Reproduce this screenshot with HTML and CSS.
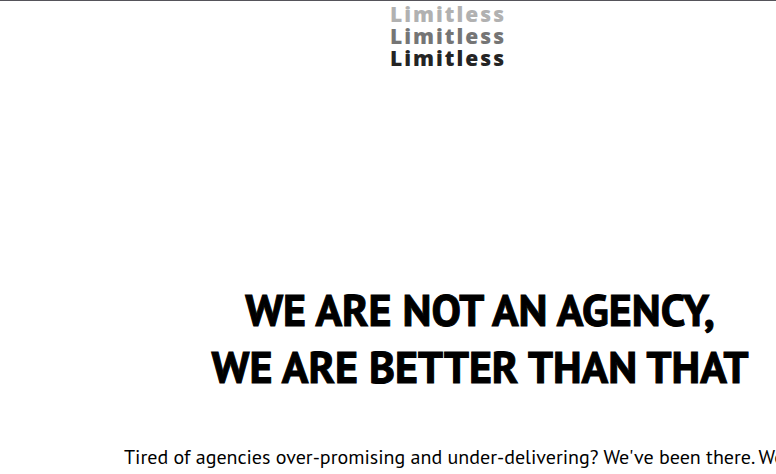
FILE: index.html
```
<!DOCTYPE html>
<html lang="en">
<head>
<meta charset="utf-8">
<meta name="viewport" content="width=device-width, initial-scale=1">
<title>Limitless</title>
<link rel="stylesheet" href="styles.css">
</head>
<body>
<header class="site-header">
<div class="logo">
<span class="logo-line logo-light">Limitless</span>
<span class="logo-line logo-mid">Limitless</span>
<span class="logo-line logo-dark">Limitless</span>
</div>
</header>
<main class="hero">
<h1 class="hero-title">WE ARE NOT AN AGENCY,<br>WE ARE BETTER THAN THAT</h1>
<p class="hero-text">Tired of agencies over-promising and under-delivering? We've been there. We</p>
</main>
</body>
</html>
```
FILE: styles.css
```
* {
  box-sizing: border-box;
}

body {
  margin: 0;
  overflow: hidden;
  background: #fff;
  color: #000;
  font-family: "PT Sans", Lato, "Noto Sans", sans-serif;
}

.site-header {
  display: flex;
  justify-content: center;
  padding: 2px 0 0 120px;
  border-top: 1px solid #55535a;
}

.logo {
  display: flex;
  flex-direction: column;
  font: 800 21px/22px "Open Sans", sans-serif;
  letter-spacing: 2px;
}

.logo-light {
  color: #b1b1b1;
}

.logo-mid {
  color: #757575;
}

.logo-dark {
  color: #242424;
}

.hero {
  padding-top: 212px;
}

.hero-title {
  margin: 0;
  padding-left: 184px;
  font-size: 44px;
  font-weight: 700;
  line-height: 57px;
  text-align: center;
  white-space: nowrap;
  -webkit-text-stroke: 1px #000;
}

.hero-text {
  margin: 47px 0 0 124px;
  font-size: 20px;
  line-height: 30px;
  white-space: nowrap;
}
```
